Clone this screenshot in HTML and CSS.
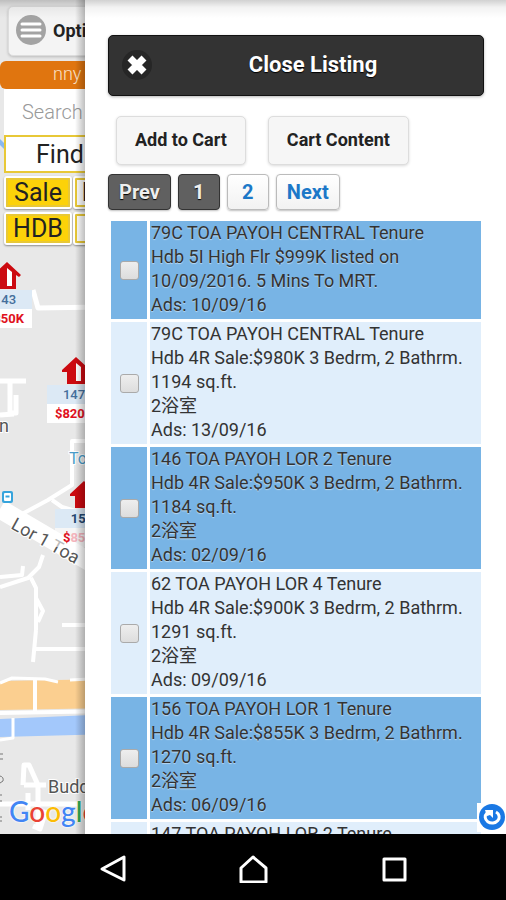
FILE: index.html
```html
<!DOCTYPE html>
<html lang="en">
<head>
<meta charset="utf-8">
<meta name="viewport" content="width=device-width, initial-scale=1">
<title>Listing</title>
<link rel="stylesheet" href="styles.css">
</head>
<body>
<div class="app">
  <div class="map">
    <svg class="map-tiles" width="110" height="834" viewBox="0 0 110 834" aria-hidden="true">
      <rect width="110" height="834" fill="#e8e8e8"/>
      <path d="M0 145L3 142" stroke="#8ab8f0" stroke-width="12"/>
      <!-- expressway and canal -->
      <path d="M0 681L110 679V708L0 710Z" fill="#fbcf90"/>
      <path d="M0 719L110 714V734L0 737Z" fill="#a3c8fb"/>
      <g fill="none" stroke="#fff" stroke-linejoin="round">
        <path d="M33 290L38 308L110 307" stroke-width="5"/>
        <path d="M0 381H26M10 380V413H16V395M0 415L14 414" stroke-width="5"/>
        <path d="M110 441H72V485L48 500L22 514M52 500L62 507L90 515" stroke-width="4"/>
        <path d="M0 509L90 562" stroke-width="19"/>
        <path d="M43 555L39 567L28 578L0 587M0 577L22 575L23 566M31 578L36 588V630M36 598L43 611L38 622" stroke-width="4"/>
        <path d="M62 625H110M36 630L33 662M35 649H110" stroke-width="4"/>
        <path d="M0 683L12 678L45 679L58 682M70 680L110 678" stroke-width="3"/>
        <path d="M0 713L110 711M35 680V711" stroke-width="4"/>
        <path d="M13 718V738L0 740" stroke-width="3"/>
        <path d="M23 785L24 765H29L38 785V826M24 785H46M0 804H80M33 826L40 829L46 810M28 793V810" stroke-width="5"/>
      </g>
      <g fill="none" stroke="#777" stroke-width="1">
        <path d="M0 754h3M0 759h3M0 776q4 1 3 5l-3 2M0 795h2M0 801h2M0 817h2M0 821h2"/>
      </g>
      <rect x="2" y="491" width="11" height="12" rx="2" fill="#37a4dc"/>
      <rect x="4" y="493" width="7" height="8" rx="1" fill="#fff"/>
      <path d="M5.500 495.500h4v2h-4z" fill="#37a4dc"/>
      <g class="map-label">
        <text x="-1" y="432">n</text>
        <text x="48" y="793">Buddhist</text>
        <text x="69" y="464" class="map-label-station">Toa</text>
        <text x="10" y="528" transform="rotate(29 10 528)" class="map-label-road">Lor 1 Toa</text>
      </g>
    </svg>

    <div class="controls">
      <button type="button" class="btn-options">
        <svg width="32" height="32" viewBox="0 0 32 32" aria-hidden="true">
          <circle cx="16" cy="16" r="15" fill="#a3a3a3"/>
          <path d="M7 10H25M7 16H25M7 22H25" stroke="#fff" stroke-width="3" stroke-linecap="round"/>
        </svg>
        Options
      </button>
      <div class="banner">nny</div>
      <input type="text" class="search" placeholder="Search" aria-label="Search">
      <button type="button" class="btn-find">Find</button>
      <div class="filters">
        <button type="button" class="btn-filter on">Sale</button>
        <button type="button" class="btn-filter">Rent</button>
      </div>
      <div class="filters">
        <button type="button" class="btn-filter on">HDB</button>
        <button type="button" class="btn-filter" aria-label="Condo"></button>
      </div>
    </div>

    <div class="pin pin-143">
      <svg width="30" height="28" viewBox="0 0 30 28"><path d="M17 0L31 13L29 15L26 13V27H8V13L5 15L3 13Z" fill="#cc0a10"/><path d="M17 6L22 10V24H17Z" fill="#fff"/></svg>
      <span class="pin-block">143</span>
      <span class="pin-price">$850K</span>
    </div>
    <div class="pin pin-147">
      <svg width="30" height="28" viewBox="0 0 30 28"><path d="M17 0L31 13L29 15L26 13V27H8V15H3V13Z" fill="#cc0a10"/><path d="M17 6L22 10V24H17Z" fill="#fff"/></svg>
      <span class="pin-block">147</span>
      <span class="pin-price">$820K</span>
    </div>
    <div class="pin pin-156">
      <svg width="30" height="28" viewBox="0 0 30 28"><path d="M17 0L31 13L29 15L26 13V27H8V15H3V13Z" fill="#cc0a10"/></svg>
      <span class="pin-block">156</span>
      <span class="pin-price faded">$<i>855K</i></span>
    </div>

    <div class="google"><span class="g-blue">G</span><span class="g-red">o</span><span class="g-yellow">o</span><span class="g-blue">g</span><span class="g-green">l</span><span class="g-red">e</span></div>
  </div>

  <div class="panel">
    <button type="button" class="btn-close">
      <svg width="34" height="34" viewBox="0 0 34 34" aria-hidden="true">
        <circle cx="17" cy="17" r="15" fill="#262626"/>
        <path d="M10 10L24 24M24 10L10 24" stroke="#fff" stroke-width="7"/>
      </svg>
      <span>Close Listing</span>
    </button>

    <div class="cart">
      <button type="button" class="btn-cart">Add to Cart</button>
      <button type="button" class="btn-cart">Cart Content</button>
    </div>

    <div class="pager">
      <a href="#prev" class="page current">Prev</a>
      <a href="#1" class="page current">1</a>
      <a href="#2" class="page">2</a>
      <a href="#next" class="page">Next</a>
    </div>

    <table class="listing">
      <tr>
        <td class="pick"><input type="checkbox" id="ad-1" aria-labelledby="text-1"></td>
        <td><label for="ad-1" id="text-1">79C TOA PAYOH CENTRAL Tenure<br>Hdb 5I High Flr $999K listed on 10/09/2016. 5 Mins To MRT.<br>Ads: 10/09/16</label></td>
      </tr>
      <tr>
        <td class="pick"><input type="checkbox" id="ad-2" aria-labelledby="text-2"></td>
        <td><label for="ad-2" id="text-2">79C TOA PAYOH CENTRAL Tenure<br>Hdb 4R Sale:$980K 3 Bedrm, 2 Bathrm. 1194 sq.ft.<br>2浴室<br>Ads: 13/09/16</label></td>
      </tr>
      <tr>
        <td class="pick"><input type="checkbox" id="ad-3" aria-labelledby="text-3"></td>
        <td><label for="ad-3" id="text-3">146 TOA PAYOH LOR 2 Tenure<br>Hdb 4R Sale:$950K 3 Bedrm, 2 Bathrm. 1184 sq.ft.<br>2浴室<br>Ads: 02/09/16</label></td>
      </tr>
      <tr>
        <td class="pick"><input type="checkbox" id="ad-4" aria-labelledby="text-4"></td>
        <td><label for="ad-4" id="text-4">62 TOA PAYOH LOR 4 Tenure<br>Hdb 4R Sale:$900K 3 Bedrm, 2 Bathrm. 1291 sq.ft.<br>2浴室<br>Ads: 09/09/16</label></td>
      </tr>
      <tr>
        <td class="pick"><input type="checkbox" id="ad-5" aria-labelledby="text-5"></td>
        <td><label for="ad-5" id="text-5">156 TOA PAYOH LOR 1 Tenure<br>Hdb 4R Sale:$855K 3 Bedrm, 2 Bathrm. 1270 sq.ft.<br>2浴室<br>Ads: 06/09/16</label></td>
      </tr>
      <tr>
        <td></td>
        <td>147 TOA PAYOH LOR 2 Tenure</td>
      </tr>
    </table>
  </div>

  <button type="button" class="btn-refresh" aria-label="Refresh">
    <svg width="28" height="28" viewBox="0 0 28 28">
      <circle cx="14" cy="14" r="13" fill="#1a78e4"/>
      <path d="M9 10A7 6 0 1 0 18 9" fill="none" stroke="#fff" stroke-width="3"/>
      <path d="M7 7H15V15L12 12L9 13Z" fill="#fff"/>
    </svg>
  </button>
</div>

<nav class="navbar">
  <button type="button" aria-label="Back"><svg width="32" height="32" viewBox="0 0 32 32"><path d="M25 6V29L3 18Z"/></svg></button>
  <button type="button" aria-label="Home"><svg width="32" height="32" viewBox="0 0 32 32"><path d="M4 31V17L16 6L29 17V31Z"/></svg></button>
  <button type="button" aria-label="Recent apps"><svg width="32" height="32" viewBox="0 0 32 32"><path d="M9 8H30V29H9Z"/></svg></button>
</nav>
</body>
</html>
```

FILE: styles.css
```css
* {
  box-sizing: border-box;
}

body {
  display: flex;
  flex-direction: column;
  height: 100vh;
  margin: 0;
  font-family: Roboto, "Noto Sans CJK SC", sans-serif;
  font-size: 18px;
  color: #333;
}

button,
input {
  margin: 0;
  font-family: inherit;
}

.app {
  position: relative;
  display: flex;
  flex: 1;
  min-height: 0;
  overflow: hidden;
}

/* shade under the status bar */
.app::before {
  content: "";
  position: absolute;
  z-index: 3;
  top: 0;
  left: 0;
  right: 0;
  height: 18px;
  background: linear-gradient(rgba(0, 0, 0, 0.18), rgba(0, 0, 0, 0.05) 40%, transparent);
  pointer-events: none;
}

/* map */
.map {
  position: relative;
  flex: none;
  width: 16.8%;
  overflow: hidden;
  background: #e8e8e8;
}

.map::after {
  content: "";
  position: absolute;
  top: 0;
  right: 0;
  bottom: 0;
  width: 10px;
  background: linear-gradient(to right, transparent, rgba(0, 0, 0, 0.25));
}

.map-tiles {
  position: absolute;
  top: 0;
  left: 0;
}

.map-label {
  font-size: 18px;
  fill: #555;
  stroke: #fff;
  stroke-width: 2px;
  paint-order: stroke;
}

.map-label-station {
  font-size: 16px;
  fill: #4a9cc9;
}

.map-label-road {
  font-size: 18px;
}

.controls {
  position: relative;
  width: 200px;
  padding: 6px 0 0 4px;
}

.btn-options {
  display: flex;
  align-items: center;
  gap: 6px;
  width: 100%;
  height: 50px;
  margin-left: 4px;
  padding: 0 6px 2px;
  border: 1px solid #ddd;
  border-radius: 5px;
  background: #f4f4f4;
  box-shadow: 0 1px 3px rgba(0, 0, 0, 0.2);
  color: #222;
  font-size: 18px;
  font-weight: 700;
}

.banner {
  height: 28px;
  margin: 5px 0 0 -4px;
  padding-left: 53px;
  border-radius: 6px;
  background: #e0750f;
  color: #fbe3c8;
  font-size: 18px;
  font-weight: 300;
  line-height: 26px;
}

.search {
  display: block;
  width: 100%;
  height: 46px;
  padding: 0 18px;
  border: 0;
  background: #fff;
  font-size: 20px;
  font-weight: 300;
}

.search::placeholder {
  color: #999;
}

.btn-find {
  display: block;
  width: 100%;
  height: 38px;
  padding: 0 30px;
  border: 2px solid #e8c837;
  background: #fff;
  color: #222;
  font-size: 25px;
  text-align: left;
}

.filters {
  display: flex;
  gap: 1px;
  padding-top: 3px;
}

.btn-filter {
  min-width: 68px;
  height: 33px;
  padding: 0 6px;
  border: 2px solid #fff;
  border-radius: 3px;
  outline: 2px solid #e8c837;
  outline-offset: -4px;
  background: #fff;
  box-shadow: 0 1px 2px rgba(0, 0, 0, 0.4);
  color: #222;
  font-size: 25px;
  line-height: 28px;
}

.btn-filter.on {
  background: #fcd209;
}

.pin {
  position: absolute;
  display: flex;
  flex-direction: column;
  align-items: center;
  width: 54px;
  font-size: 13px;
  font-weight: 500;
  line-height: 19px;
}

.pin svg {
  overflow: visible;
}

.pin-block,
.pin-price {
  width: 100%;
  text-align: center;
}

.pin-block {
  background: #dce9f5;
  color: #456f9c;
}

.pin-price {
  background: #fff;
  color: #e01020;
  font-weight: 700;
}

.pin-price i {
  color: #f4b4bc;
  font-style: normal;
}

.pin-143 {
  top: 262px;
  left: -22px;
}

.pin-147 {
  top: 357px;
  left: 47px;
}

.pin-156 {
  top: 481px;
  left: 55px;
}

.pin-156 .pin-block {
  color: #24476f;
  font-weight: 700;
}

.pin-price.faded {
  background: rgba(255, 255, 255, 0.6);
}

.google {
  position: absolute;
  bottom: 7px;
  left: 9px;
  font-family: Lato, sans-serif;
  font-size: 28px;
  font-weight: 500;
  line-height: 32px;
  text-shadow: 0 0 2px #fff, 0 0 2px #fff;
}

.g-blue {
  color: #4285f4;
}

.g-red {
  color: #ea4335;
}

.g-yellow {
  color: #fbbc05;
}

.g-green {
  color: #34a853;
}

/* listing panel */
.panel {
  flex: 1;
  min-width: 0;
  padding: 35px 22px 0 23px;
  overflow: hidden;
  background: #fff;
}

.btn-close {
  display: flex;
  align-items: center;
  width: 100%;
  height: 61px;
  padding: 0 11px 2px;
  border: 1px solid #111;
  border-radius: 5px;
  background: #333;
  box-shadow: 0 1px 3px rgba(0, 0, 0, 0.3);
  color: #fff;
  font-size: 22px;
  font-weight: 700;
  text-shadow: 0 1px 1px #000;
}

.btn-close span {
  flex: 1;
  text-align: center;
}

.cart {
  display: flex;
  gap: 22px;
  padding: 20px 8px 9px;
}

.btn-cart {
  height: 49px;
  padding: 0 18px 3px;
  border: 1px solid #ddd;
  border-radius: 5px;
  background: #f6f6f6;
  box-shadow: 0 1px 3px rgba(0, 0, 0, 0.15);
  color: #222;
  font-size: 18px;
  font-weight: 700;
}

.pager {
  display: flex;
  gap: 7px;
  margin-bottom: 8px;
}

.page {
  min-width: 42px;
  padding: 0 10px;
  border: 1px solid #bbb;
  border-radius: 4px;
  background: linear-gradient(#fff, #f2f2f2);
  box-shadow: 0 1px 2px rgba(0, 0, 0, 0.25);
  color: #1c78c8;
  font-size: 20px;
  font-weight: 700;
  line-height: 34px;
  text-align: center;
  text-decoration: none;
}

.page.current {
  border-color: #333;
  background: #606060;
  color: #eee;
  text-shadow: 0 1px 1px #000;
}

.listing {
  width: 100%;
  border-spacing: 3px;
  line-height: 24px;
}

.listing td {
  padding: 0 1px 2px;
  background: #e0eefb;
}

.listing tr:nth-child(odd) td {
  background: #78b4e5;
  text-shadow: 0 1px 1px rgba(255, 255, 255, 0.5);
}

.listing .pick {
  width: 36px;
  text-align: center;
}

.pick input {
  width: 19px;
  height: 19px;
  border: 1px solid #aaa;
  border-radius: 3px;
  background: linear-gradient(#eee, #ddd);
  vertical-align: middle;
  appearance: none;
}

.pick input:checked {
  background: #2b7de0;
}

.btn-refresh {
  position: absolute;
  right: 0;
  bottom: 2px;
  width: 29px;
  height: 29px;
  padding: 0;
  border: 0;
  background: #fff;
}

/* system buttons */
.navbar {
  display: flex;
  justify-content: center;
  gap: 21%;
  padding: 17px 0;
  background: #000;
}

.navbar button {
  height: 32px;
  padding: 0;
  border: 0;
  background: none;
}

.navbar svg {
  fill: none;
  stroke: #fff;
  stroke-width: 3px;
  stroke-linejoin: round;
}
```
